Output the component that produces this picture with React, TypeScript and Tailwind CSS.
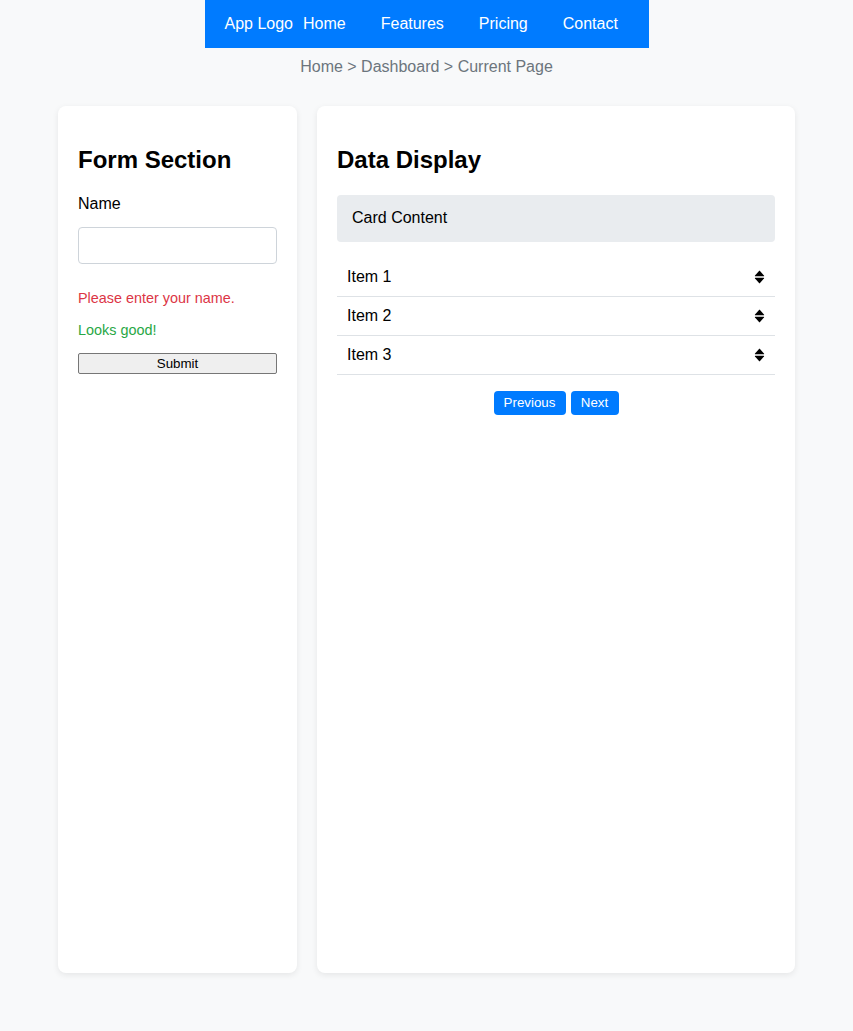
import React from "react";

const SortIcon = () => (
  <svg width="11" height="14" viewBox="0 0 11 14" className="shrink-0">
    <path d="M1 5.6 L5.5 0.6 L10 5.6 Q10.4 6.2 9.6 6.2 L1.4 6.2 Q0.6 6.2 1 5.6 Z" fill="#000" />
    <path d="M1 8.4 L5.5 13.4 L10 8.4 Q10.4 7.8 9.6 7.8 L1.4 7.8 Q0.6 7.8 1 8.4 Z" fill="#000" />
  </svg>
);

const items = ["Item 1", "Item 2", "Item 3"];

export default function App() {
  return (
    <div className="min-h-[1031px] bg-[#f8f9fa] font-['Liberation_Sans',Arial,sans-serif] text-black">
      <nav className="mx-auto flex h-12 w-[444px] items-center bg-[#007bff] pl-5 text-base text-white">
        <span className="mr-[10px]">App Logo</span>
        <div className="flex gap-[35px]">
          <a>Home</a>
          <a>Features</a>
          <a>Pricing</a>
          <a>Contact</a>
        </div>
      </nav>

      <div className="mt-[7px] text-center text-base leading-6 text-[#6c757d]">
        Home &gt; Dashboard &gt; Current Page
      </div>

      <main className="mt-[27px] flex justify-center gap-5">
        <section className="h-[867px] w-[239px] rounded-lg bg-white p-5 shadow-[0_2px_6px_rgba(0,0,0,0.08)]">
          <h2 className="mt-5 mb-[19.9px] text-2xl leading-[28.8px] font-bold">Form Section</h2>
          <label className="mb-[14px] block text-base leading-[18.4px]">Name</label>
          <input
            type="text"
            className="block h-[37px] w-full rounded border border-[#ced4da] bg-white px-3"
          />
          <p className="mt-6 text-[14.4px] leading-[21.6px] text-[#dc3545]">Please enter your name.</p>
          <p className="mt-[10px] text-[14.4px] leading-[21.6px] text-[#28a745]">Looks good!</p>
          <button className="mt-3 block h-[21px] w-full rounded-[2px] border border-[#767676] bg-[#efefef] text-[13.33px] leading-[19px] text-black">
            Submit
          </button>
        </section>

        <section className="h-[867px] w-[478px] rounded-lg bg-white p-5 shadow-[0_2px_6px_rgba(0,0,0,0.08)]">
          <h2 className="mt-5 mb-[19.9px] text-2xl leading-[28.8px] font-bold">Data Display</h2>
          <div className="flex h-[47px] items-center rounded bg-[#e9ecef] px-[15px] text-base">
            Card Content
          </div>
          <ul className="mt-4">
            {items.map((item) => (
              <li
                key={item}
                className="flex h-[39px] items-center justify-between border-b border-[#dee2e6] px-[10px] text-base"
              >
                <span>{item}</span>
                <SortIcon />
              </li>
            ))}
          </ul>
          <div className="mt-4 flex justify-center gap-[5px]">
            <button className="h-6 w-[72px] rounded bg-[#007bff] text-[13.33px] text-white">Previous</button>
            <button className="h-6 w-12 rounded bg-[#007bff] text-[13.33px] text-white">Next</button>
          </div>
        </section>
      </main>
    </div>
  );
}
